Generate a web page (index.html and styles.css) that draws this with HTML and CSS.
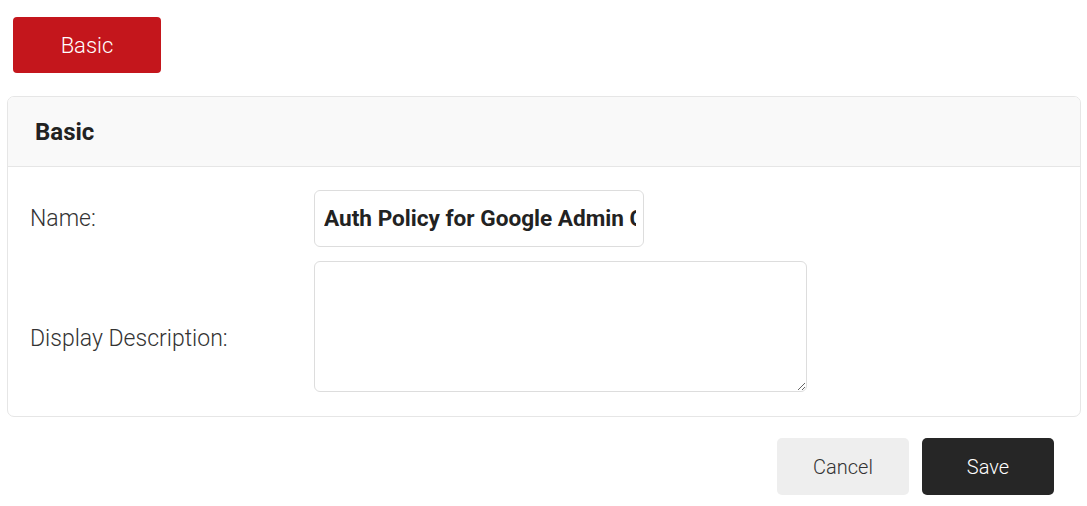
FILE: index.html
```html
<!DOCTYPE html>
<html>
<head>
<meta charset="utf-8">
<link rel="stylesheet" href="styles.css">
</head>
<body>
<div class="tabs">
  <button class="tab active">Basic</button>
</div>
<div class="card">
  <div class="card-header">Basic</div>
  <div class="card-body">
    <div class="row">
      <label class="label">Name:</label>
      <input class="input" type="text" value="Auth Policy for Google Admin Console">
    </div>
    <div class="row">
      <label class="label label-desc">Display Description:</label>
      <textarea class="textarea"></textarea>
    </div>
  </div>
</div>
<div class="footer">
  <button class="btn btn-cancel">Cancel</button>
  <button class="btn btn-save">Save</button>
</div>
</body>
</html>
```

FILE: styles.css
```css
* { box-sizing: border-box; }
body {
  margin: 0;
  padding: 17px 6px 0 7px;
  font-family: Roboto, "Liberation Sans", sans-serif;
  background: #fff;
  color: #333;
}
.tabs { padding-left: 6px; display: flex; }
.tab {
  width: 148px;
  height: 56px;
  border: none;
  border-radius: 4px;
  font-family: inherit;
  font-size: 22px;
  font-weight: 300;
  color: #fff;
  background: #c4161c;
}
.card {
  margin-top: 23px;
  border: 1px solid #e6e6e6;
  border-radius: 7px;
  overflow: hidden;
}
.card-header {
  height: 70px;
  background: #f9f9f9;
  border-bottom: 1px solid #e6e6e6;
  display: flex;
  align-items: center;
  padding-left: 27px;
  font-size: 24px;
  font-weight: 700;
  color: #222;
}
.card-body {
  padding: 23px 22px 24px 22px;
  display: flex;
  flex-direction: column;
  gap: 14px;
}
.row {
  display: grid;
  grid-template-columns: 284px auto;
  align-items: center;
  justify-items: start;
}
.label {
  font-size: 23px;
  font-weight: 300;
  color: #333;
}
.label-desc { padding-top: 23px; }
.input {
  width: 330px;
  height: 57px;
  border: 1px solid #ddd;
  border-radius: 6px;
  padding: 0 7px 0 9px;
  font-family: inherit;
  font-size: 22.6px;
  font-weight: 700;
  color: #222;
  outline: none;
}
.textarea {
  width: 493px;
  height: 131px;
  border: 1px solid #ddd;
  border-radius: 6px;
  font-family: inherit;
  font-size: 16px;
  outline: none;
}
.footer {
  margin-top: 21px;
  display: flex;
  justify-content: flex-end;
  gap: 13px;
  padding-right: 27px;
}
.btn {
  width: 132px;
  height: 57px;
  border: none;
  border-radius: 5px;
  font-family: inherit;
  font-size: 20px;
}
.btn-cancel { background: #eeeeee; color: #333; font-weight: 300; }
.btn-save { background: #262626; color: #fff; font-weight: 300; }
```
